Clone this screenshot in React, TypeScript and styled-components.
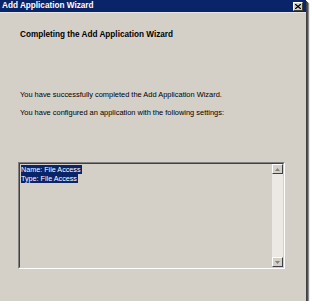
import React from "react";
import styled, {createGlobalStyle} from "styled-components";

const GlobalStyle = createGlobalStyle`
  html, body {
    margin: 0;
    padding: 0;
    background: #ffffff;
  }
  body {
    font-family: Tahoma, "DejaVu Sans", "Liberation Sans", sans-serif;
  }
`;

const Dialog = styled.div`
  width: 306px;
  height: 301px;
  background: #d4d0c8;
  display: flex;
  flex-direction: column;
  box-shadow: 1px 1px 0 #404040, 2px 2px 0 #505050, 3px 3px 1px rgba(0, 0, 0, 0.45);
`;

const TitleBar = styled.div`
  height: 12px;
  background: #0a246a;
  display: flex;
  align-items: center;
  justify-content: space-between;
  padding: 0 3px 0 2px;
`;

const TitleText = styled.div`
  font-family: "Liberation Sans", Arial, sans-serif;
  font-weight: bold;
  font-size: 8.2px;
  color: #ffffff;
  line-height: 12px;
`;

const CloseButton = styled.div`
  width: 10px;
  height: 9px;
  background: #d4d0c8;
  box-sizing: border-box;
  border-top: 1px solid #ffffff;
  border-left: 1px solid #ffffff;
  border-right: 1px solid #404040;
  border-bottom: 1px solid #404040;
  display: flex;
  align-items: center;
  justify-content: center;
`;

const Body = styled.div`
  flex: 1;
  display: flex;
  flex-direction: column;
  padding: 0 21px 0 18px;
  border-top: 1px solid #e8e6e0;
`;

const Heading = styled.div`
  margin-top: 17px;
  padding-left: 2px;
  font-family: "Liberation Sans", Arial, sans-serif;
  font-weight: bold;
  font-size: 8.2px;
  line-height: 10px;
  color: #000000;
`;

const Para = styled.div<{gap: number}>`
  margin-top: ${(p) => p.gap}px;
  padding-left: 2px;
  font-family: "Liberation Sans", Arial, sans-serif;
  font-size: 7.45px;
  line-height: 10px;
  color: #000000;
`;

const ListBox = styled.div`
  margin-top: 44px;
  height: 107px;
  box-sizing: border-box;
  border-top: 1px solid #808080;
  border-left: 1px solid #808080;
  border-right: 1px solid #ffffff;
  border-bottom: 1px solid #ffffff;
  display: flex;
`;

const ListInner = styled.div`
  flex: 1;
  display: flex;
  border-top: 1px solid #404040;
  border-left: 1px solid #404040;
  border-right: 1px solid #d4d0c8;
  border-bottom: 1px solid #d4d0c8;
`;

const Lines = styled.div`
  flex: 1;
  padding: 1px 0 0 1px;
  display: flex;
  flex-direction: column;
  align-items: flex-start;
`;

const Selected = styled.span`
  background: #0a246a;
  color: #ffffff;
  font-family: "Liberation Sans", Arial, sans-serif;
  font-size: 7.2px;
  line-height: 9px;
  padding-right: 1px;
`;

const ScrollBar = styled.div`
  width: 11px;
  background: #ece9e4;
  display: flex;
  flex-direction: column;
  justify-content: space-between;
`;

const ScrollButton = styled.div`
  height: 10px;
  box-sizing: border-box;
  background: #d4d0c8;
  border-top: 1px solid #ffffff;
  border-left: 1px solid #ffffff;
  border-right: 1px solid #404040;
  border-bottom: 1px solid #404040;
  display: flex;
  align-items: center;
  justify-content: center;
`;

function Arrow({up}: {up: boolean}) {
  return (
    <svg width="5" height="3" viewBox="0 0 5 3">
      <path d={up ? "M2.5 0 L5 3 L0 3 Z" : "M0 0 L5 0 L2.5 3 Z"} fill="#808080" />
    </svg>
  );
}

export default function App() {
  return (
    <>
      <GlobalStyle />
      <Dialog>
        <TitleBar>
          <TitleText>Add Application Wizard</TitleText>
          <CloseButton>
            <svg width="6" height="5" viewBox="0 0 6 5">
              <path d="M0 0 L6 5 M6 0 L0 5" stroke="#000" strokeWidth="1.3" />
            </svg>
          </CloseButton>
        </TitleBar>
        <Body>
          <Heading>Completing the Add Application Wizard</Heading>
          <Para gap={50}>You have successfully completed the Add Application Wizard.</Para>
          <Para gap={8}>You have configured an application with the following settings:</Para>
          <ListBox>
            <ListInner>
              <Lines>
                <Selected>Name: File Access</Selected>
                <Selected>Type: File Access</Selected>
              </Lines>
              <ScrollBar>
                <ScrollButton>
                  <Arrow up />
                </ScrollButton>
                <ScrollButton>
                  <Arrow up={false} />
                </ScrollButton>
              </ScrollBar>
            </ListInner>
          </ListBox>
        </Body>
      </Dialog>
    </>
  );
}
